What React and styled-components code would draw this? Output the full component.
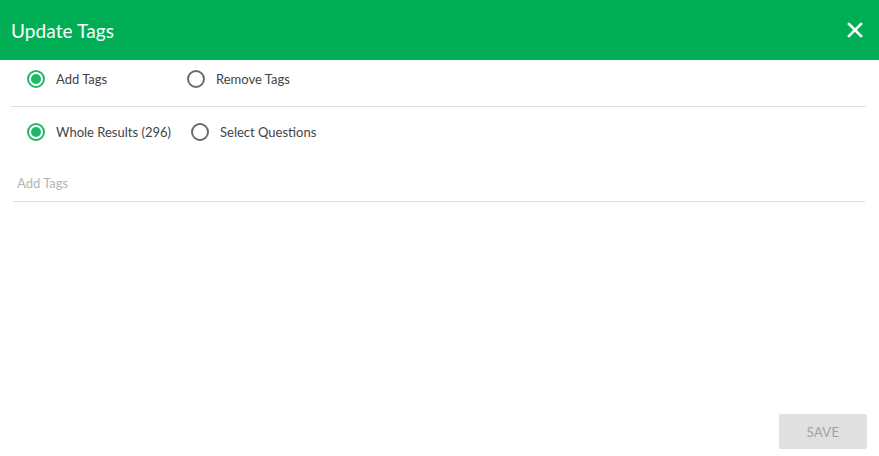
import React from 'react';
import styled, { createGlobalStyle } from 'styled-components';

const GlobalStyle = createGlobalStyle`
  html, body {
    margin: 0;
    padding: 0;
    background: #fff;
    font-family: Lato, "Open Sans", sans-serif;
  }
`;

const App = () => {
  return (
    <>
      <GlobalStyle />
      <Dialog>
        <Header>
          <Title>Update Tags</Title>
          <CloseButton aria-label='close'>
            <svg width='16' height='16' viewBox='0 0 16 16'>
              <path d='M2 2 L14 14 M14 2 L2 14' stroke='#fff' strokeWidth='2.6' strokeLinecap='square' />
            </svg>
          </CloseButton>
        </Header>
        <Body>
          <RadioRow divider>
            <RadioItem width={140}>
              <Radio checked />
              <span>Add Tags</span>
            </RadioItem>
            <RadioItem>
              <Radio />
              <span>Remove Tags</span>
            </RadioItem>
          </RadioRow>
          <RadioRow>
            <RadioItem>
              <Radio checked />
              <span>Whole Results (296)</span>
            </RadioItem>
            <RadioItem>
              <Radio />
              <span>Select Questions</span>
            </RadioItem>
          </RadioRow>
          <TagInput placeholder='Add Tags' />
        </Body>
        <Footer>
          <SaveButton disabled>SAVE</SaveButton>
        </Footer>
      </Dialog>
    </>
  );
};

export default App;

const Dialog = styled.div`
  width: 879px;
  height: 456px;
  display: flex;
  flex-direction: column;
  background: #fff;
`;

const Header = styled.div`
  height: 60px;
  background: #00af55;
  display: flex;
  align-items: center;
  justify-content: space-between;
  padding: 0 16px 0 11px;
  box-sizing: border-box;
`;

const Title = styled.h2`
  margin: 0;
  color: #fff;
  font-size: 19px;
  font-weight: 400;
  letter-spacing: 0.1px;
`;

const CloseButton = styled.button`
  border: none;
  background: none;
  padding: 0;
  display: flex;
  cursor: pointer;
`;

const Body = styled.div`
  flex: 1;
  padding: 0 13px 0 11px;
`;

const RadioRow = styled.div`
  display: flex;
  align-items: ${p => (p.divider ? 'flex-start' : 'center')};
  gap: 20px;
  height: ${p => (p.divider ? '47px' : '49px')};
  padding-top: ${p => (p.divider ? '10px' : '0')};
  box-sizing: border-box;
  padding-left: 16px;
  border-bottom: ${p => (p.divider ? '1px solid #e0e0e0' : 'none')};
`;

const RadioItem = styled.label`
  display: flex;
  align-items: center;
  gap: 11px;
  min-width: ${p => (p.width ? `${p.width}px` : 'auto')};
  font-size: 13px;
  color: #444;
`;

const Radio = styled.span`
  width: 18px;
  height: 18px;
  box-sizing: border-box;
  border-radius: 50%;
  border: 2px solid ${p => (p.checked ? '#1fb868' : '#6b6b6b')};
  display: flex;
  align-items: center;
  justify-content: center;
  &::after {
    content: '';
    width: 10px;
    height: 10px;
    border-radius: 50%;
    background: ${p => (p.checked ? '#1fb868' : 'transparent')};
  }
`;

const TagInput = styled.input`
  display: block;
  width: 852px;
  margin: 19px 0 0 2px;
  padding: 0 4px 10px;
  box-sizing: border-box;
  border: none;
  border-bottom: 1px solid #dcdcdc;
  font-family: inherit;
  font-size: 13px;
  outline: none;
  &::placeholder {
    color: #b5b5b5;
  }
`;

const Footer = styled.div`
  display: flex;
  justify-content: flex-end;
  padding: 0 12px 7px 0;
`;

const SaveButton = styled.button`
  width: 88px;
  height: 35px;
  border: none;
  border-radius: 2px;
  background: #e0e0e0;
  color: #a0a0a0;
  font-family: inherit;
  font-size: 13px;
  letter-spacing: 0.3px;
`;
